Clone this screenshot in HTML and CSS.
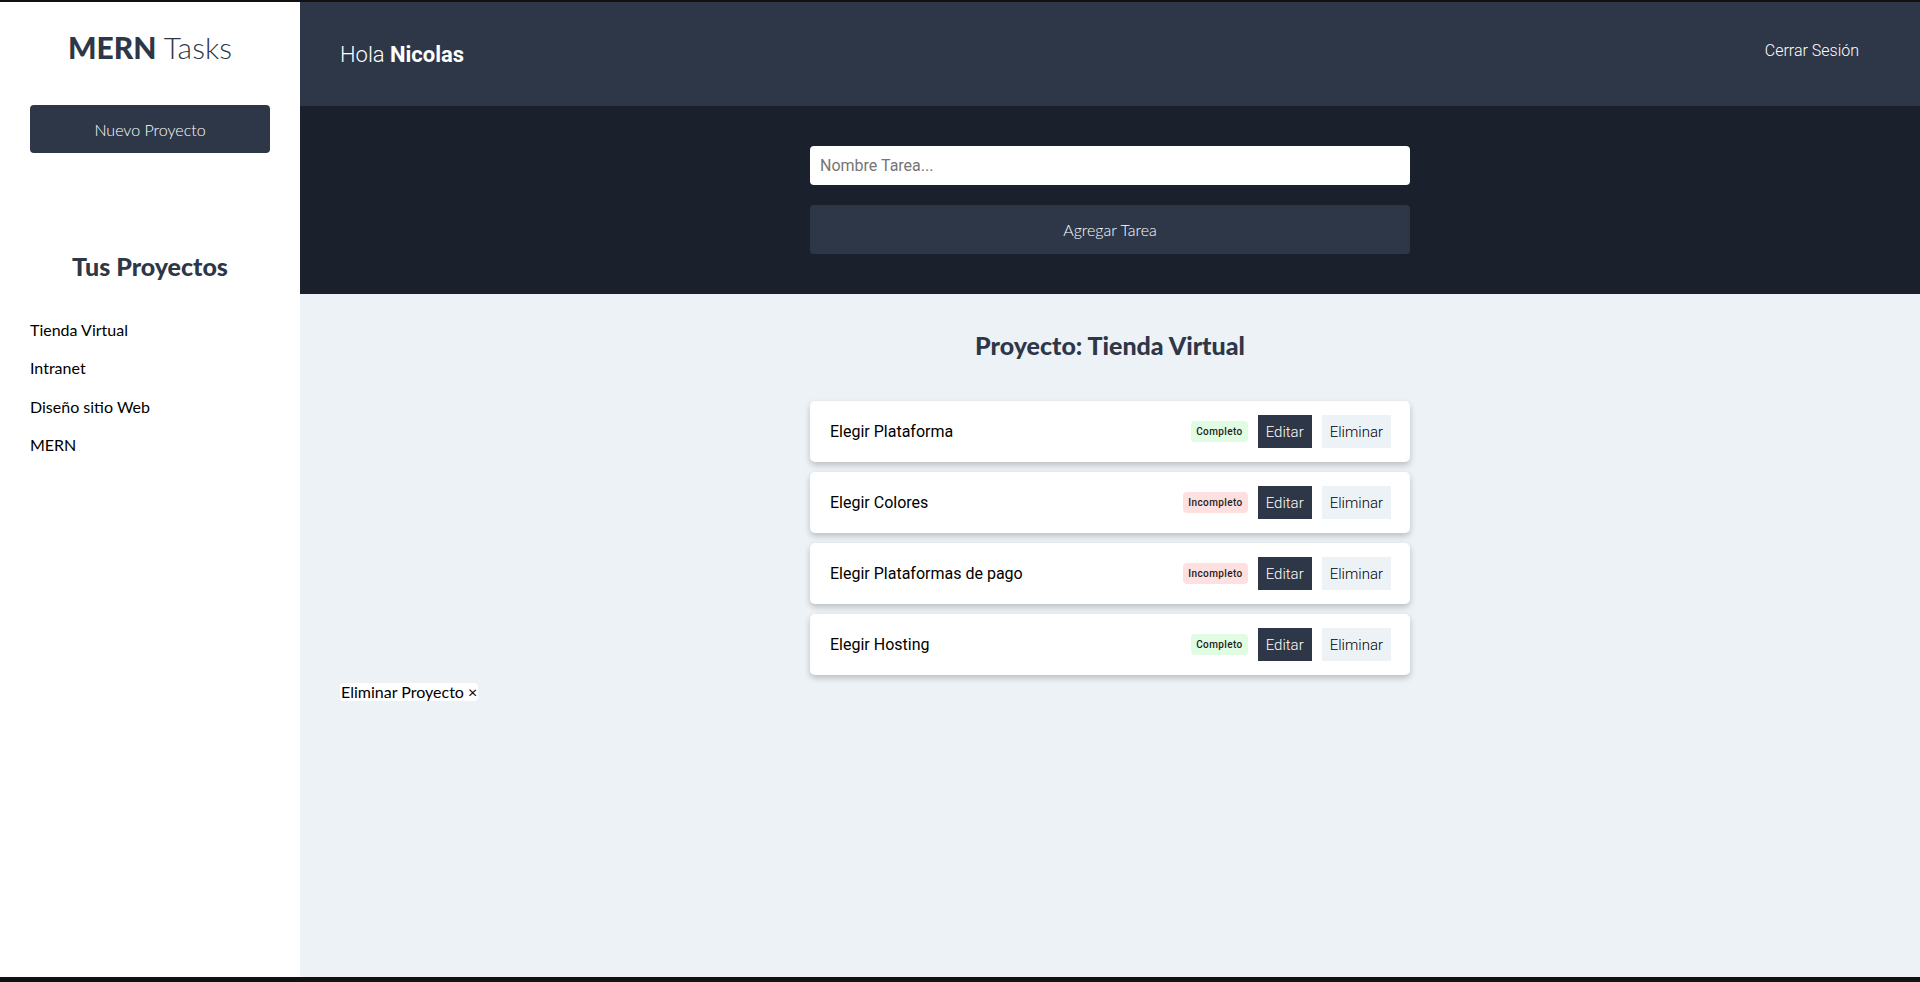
FILE: index.html
```html
<!DOCTYPE html>
<html lang="es">
<head>
<meta charset="utf-8">
<title>MERN Tasks</title>
<link rel="stylesheet" href="styles.css">
</head>
<body>
<div class="app">
  <aside class="sidebar">
    <h1 class="logo"><span class="logo-strong">MERN</span> Tasks</h1>
    <button class="btn-new" type="button">Nuevo Proyecto</button>
    <h2 class="projects-title">Tus Proyectos</h2>
    <ul class="project-list">
      <li>Tienda Virtual</li>
      <li>Intranet</li>
      <li>Diseño sitio Web</li>
      <li>MERN</li>
    </ul>
  </aside>
  <div class="main">
    <header class="topbar">
      <p class="greeting">Hola <strong>Nicolas</strong></p>
      <button class="logout" type="button">Cerrar Sesión</button>
    </header>
    <section class="task-form">
      <form class="form">
        <input class="input" type="text" placeholder="Nombre Tarea...">
        <button class="btn-add" type="button">Agregar Tarea</button>
      </form>
    </section>
    <section class="tasks">
      <h2 class="tasks-title">Proyecto: Tienda Virtual</h2>
      <ul class="task-list">
        <li class="task">
          <p class="task-name">Elegir Plataforma</p>
          <div class="task-actions">
            <span class="badge badge-ok">Completo</span>
            <button class="btn-edit" type="button">Editar</button>
            <button class="btn-del" type="button">Eliminar</button>
          </div>
        </li>
        <li class="task">
          <p class="task-name">Elegir Colores</p>
          <div class="task-actions">
            <span class="badge badge-ko">Incompleto</span>
            <button class="btn-edit" type="button">Editar</button>
            <button class="btn-del" type="button">Eliminar</button>
          </div>
        </li>
        <li class="task">
          <p class="task-name">Elegir Plataformas de pago</p>
          <div class="task-actions">
            <span class="badge badge-ko">Incompleto</span>
            <button class="btn-edit" type="button">Editar</button>
            <button class="btn-del" type="button">Eliminar</button>
          </div>
        </li>
        <li class="task">
          <p class="task-name">Elegir Hosting</p>
          <div class="task-actions">
            <span class="badge badge-ok">Completo</span>
            <button class="btn-edit" type="button">Editar</button>
            <button class="btn-del" type="button">Eliminar</button>
          </div>
        </li>
      </ul>
      <button class="delete-project" type="button">Eliminar Proyecto &times;</button>
    </section>
  </div>
</div>
</body>
</html>
```
FILE: styles.css
```css
html, body {
  margin: 0;
  padding: 0;
}
body {
  background: #111111;
  font-family: Lato, "Open Sans", sans-serif;
  color: #000;
}
.app {
  display: flex;
  height: 975px;
  margin-top: 2px;
}
.sidebar {
  width: 300px;
  flex: none;
  box-sizing: border-box;
  background: #ffffff;
  padding: 27px 30px 30px;
}
.logo {
  margin: 0;
  text-align: center;
  font-size: 30px;
  line-height: 36px;
  font-weight: 300;
  color: #2d3748;
}
.logo-strong {
  font-weight: 900;
}
.btn-new {
  display: block;
  width: 100%;
  height: 48px;
  margin-top: 40px;
  border: none;
  border-radius: 4px;
  background: #2d3748;
  color: #ffffff;
  font-family: Lato, sans-serif;
  font-size: 16px;
  font-weight: 300;
}
.projects-title {
  margin: 99px 0 0;
  text-align: center;
  font-size: 25px;
  line-height: 29px;
  font-weight: 900;
  color: #2d3748;
}
.project-list {
  list-style: none;
  margin: 39px 0 0;
  padding: 0;
}
.project-list li {
  font-size: 16px;
  line-height: 19px;
  font-weight: 400;
  color: #000;
  margin-bottom: 19.3px;
}
.main {
  flex: 1;
  display: flex;
  flex-direction: column;
  background: #edf2f7;
}
.topbar {
  height: 104px;
  flex: none;
  box-sizing: border-box;
  display: flex;
  align-items: center;
  justify-content: space-between;
  padding: 0 61px 0 40px;
  background: #2d3748;
}
.greeting {
  margin: 0;
  font-family: Roboto, sans-serif;
  font-size: 22px;
  font-weight: 300;
  color: #ffffff;
}
.greeting strong {
  font-weight: 700;
}
.logout {
  border: none;
  background: transparent;
  padding: 0 0 8px;
  font-family: Roboto, sans-serif;
  font-size: 16px;
  font-weight: 300;
  color: #ffffff;
}
.task-form {
  flex: none;
  background: #1a202c;
  padding: 40px 0;
}
.form {
  max-width: 600px;
  margin: 0 auto;
  display: flex;
  flex-direction: column;
  gap: 20px;
}
.input {
  height: 39px;
  box-sizing: border-box;
  border: none;
  border-radius: 4px;
  padding: 0 10px;
  background: #ffffff;
  font-family: Roboto, sans-serif;
  font-size: 16px;
}
.input::placeholder {
  color: #757575;
}
.btn-add {
  height: 49px;
  border: none;
  border-radius: 4px;
  background: #2d3748;
  color: #ffffff;
  font-family: Lato, sans-serif;
  font-size: 16px;
  font-weight: 300;
}
.tasks {
  padding: 0 40px;
}
.tasks-title {
  margin: 37px 0 0;
  text-align: center;
  font-size: 25px;
  line-height: 29px;
  font-weight: 900;
  color: #2d3748;
}
.task-list {
  list-style: none;
  max-width: 600px;
  margin: 41px auto 0;
  padding: 0;
  display: flex;
  flex-direction: column;
  gap: 10px;
}
.task {
  height: 61px;
  box-sizing: border-box;
  display: flex;
  align-items: center;
  justify-content: space-between;
  padding: 0 19px 0 20px;
  background: #ffffff;
  border-radius: 5px;
  box-shadow: 0 3px 6px rgba(0, 0, 0, 0.22);
}
.task-name {
  margin: 0;
  font-family: Roboto, sans-serif;
  font-size: 16px;
  color: #000;
}
.task-actions {
  display: flex;
  align-items: center;
  gap: 10px;
}
.badge {
  height: 21px;
  line-height: 21px;
  padding: 0 5px;
  border-radius: 4px;
  font-family: Roboto, sans-serif;
  font-size: 10px;
  font-weight: 500;
  letter-spacing: 0.4px;
  color: #222;
}
.badge-ok {
  background: #e0fde3;
}
.badge-ko {
  background: #fee0e0;
}
.btn-edit,
.btn-del {
  height: 33px;
  border: none;
  padding: 0 8px;
  font-family: Roboto, sans-serif;
  font-size: 15px;
  font-weight: 300;
}
.btn-edit {
  background: #2d3748;
  color: #ffffff;
}
.btn-del {
  background: #edf2f7;
  color: #000;
}
.delete-project {
  display: block;
  margin-top: 8px;
  padding: 0 1px;
  height: 18px;
  border: none;
  border-radius: 4px;
  background: #ffffff;
  font-family: Lato, sans-serif;
  font-size: 16px;
  font-weight: 400;
  line-height: 18px;
  color: #000;
}
```
